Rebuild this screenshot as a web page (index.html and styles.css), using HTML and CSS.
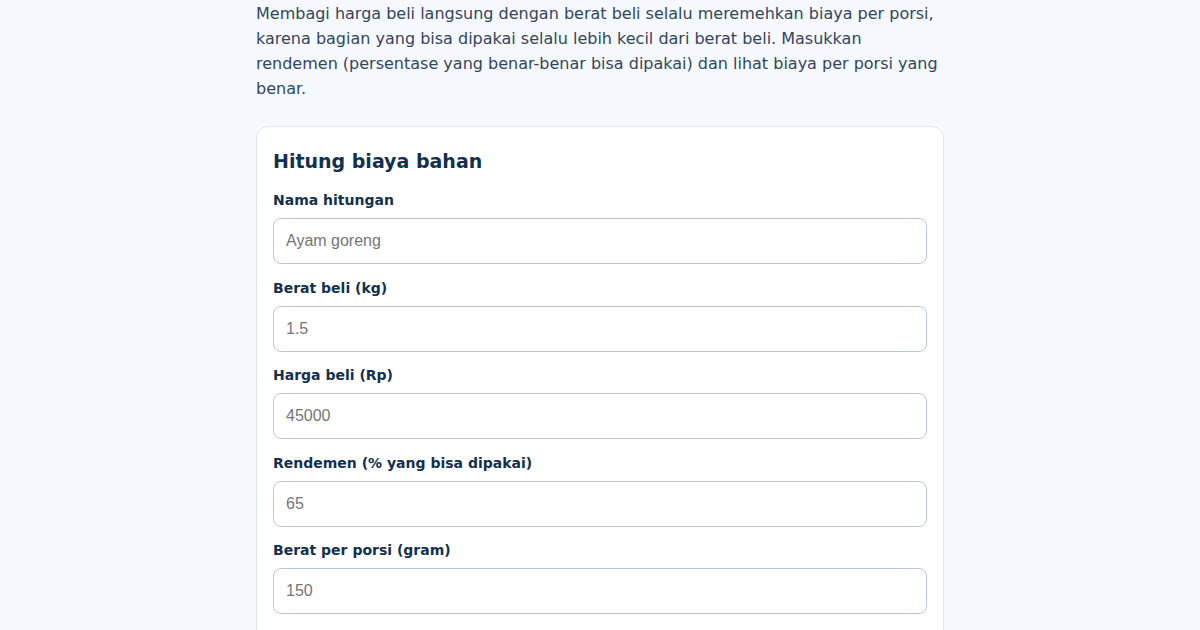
FILE: index.html
```html
<!DOCTYPE html>
<html lang="id">
<head>
<meta charset="utf-8">
<title>Hitung biaya bahan</title>
<link rel="stylesheet" href="styles.css">
</head>
<body>
<main class="page">
  <p class="intro">Membagi harga beli langsung dengan berat beli selalu meremehkan biaya per porsi, karena bagian yang bisa dipakai selalu lebih kecil dari berat beli. Masukkan rendemen (persentase yang benar-benar bisa dipakai) dan lihat biaya per porsi yang benar.</p>
  <section class="card">
    <h2 class="card-title">Hitung biaya bahan</h2>
    <div class="field">
      <label class="label" for="nama">Nama hitungan</label>
      <input class="input" id="nama" type="text" placeholder="Ayam goreng">
    </div>
    <div class="field">
      <label class="label" for="berat">Berat beli (kg)</label>
      <input class="input" id="berat" type="text" placeholder="1.5">
    </div>
    <div class="field">
      <label class="label" for="harga">Harga beli (Rp)</label>
      <input class="input" id="harga" type="text" placeholder="45000">
    </div>
    <div class="field">
      <label class="label" for="rendemen">Rendemen (% yang bisa dipakai)</label>
      <input class="input" id="rendemen" type="text" placeholder="65">
    </div>
    <div class="field">
      <label class="label" for="porsi">Berat per porsi (gram)</label>
      <input class="input" id="porsi" type="text" placeholder="150">
    </div>
  </section>
</main>
</body>
</html>
```
FILE: styles.css
```css
* { box-sizing: border-box; }
html, body {
  margin: 0;
  padding: 0;
  background: #f5f9fd;
  font-family: "DejaVu Sans", sans-serif;
}
.page {
  width: 688px;
  margin: 0 auto;
  padding-top: 1px;
}
.intro {
  margin: 0 0 25px;
  font-size: 16px;
  line-height: 25px;
  color: #334560;
}
.card {
  background: #ffffff;
  border: 1px solid #dfe7f1;
  border-radius: 12px;
  padding: 20px 16px 16px;
}
.card-title {
  margin: 0 0 15px;
  font-size: 19px;
  line-height: 28px;
  font-weight: bold;
  color: #12304f;
}
.field {
  display: flex;
  flex-direction: column;
  gap: 8px;
  margin-bottom: 13.5px;
}
.label {
  font-size: 14px;
  line-height: 20px;
  font-weight: bold;
  color: #12304f;
}
.input {
  width: 100%;
  height: 46px;
  padding: 0 12px;
  border: 1px solid #bac6dc;
  border-radius: 8px;
  background: #ffffff;
  font-family: "Liberation Sans", Arial, sans-serif;
  font-size: 16px;
  color: #1e293b;
  outline: none;
}
.input::placeholder {
  color: #757575;
}
```
